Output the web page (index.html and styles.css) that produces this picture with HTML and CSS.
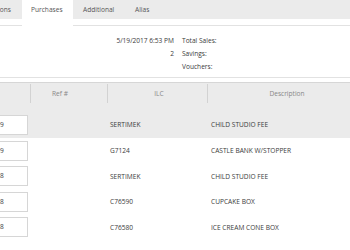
FILE: index.html
```html
<!DOCTYPE html>
<html>
<head>
<meta charset="utf-8">
<link rel="stylesheet" href="styles.css">
</head>
<body>
<div class="page">
  <div class="tabs">
    <div class="tab first">Transactions</div>
    <div class="tab active">Purchases</div>
    <div class="tab add">Additional</div>
    <div class="tab alias">Alias</div>
  </div>
  <div class="summary">
    <div class="vals">
      <div>5/19/2017 6:53 PM</div>
      <div>2</div>
      <div>&nbsp;</div>
    </div>
    <div class="labels">
      <div>Total Sales:</div>
      <div>Savings:</div>
      <div>Vouchers:</div>
    </div>
  </div>
  <div class="grid">
    <div class="row head">
      <div class="c1"></div>
      <div class="c2 sep">Ref #</div>
      <div class="c3 sep">ILC</div>
      <div class="c4 sep">Description</div>
    </div>
    <div class="row sel">
      <div class="c1"><div class="box">14.99</div></div>
      <div class="c2"></div>
      <div class="c3">SERTIMEK</div>
      <div class="c4">CHILD STUDIO FEE</div>
    </div>
    <div class="row">
      <div class="c1"><div class="box">14.99</div></div>
      <div class="c2"></div>
      <div class="c3">G7124</div>
      <div class="c4">CASTLE BANK W/STOPPER</div>
    </div>
    <div class="row">
      <div class="c1"><div class="box">14.98</div></div>
      <div class="c2"></div>
      <div class="c3">SERTIMEK</div>
      <div class="c4">CHILD STUDIO FEE</div>
    </div>
    <div class="row">
      <div class="c1"><div class="box">14.98</div></div>
      <div class="c2"></div>
      <div class="c3">C76590</div>
      <div class="c4">CUPCAKE BOX</div>
    </div>
    <div class="row">
      <div class="c1"><div class="box">14.98</div></div>
      <div class="c2"></div>
      <div class="c3">C76580</div>
      <div class="c4">ICE CREAM CONE BOX</div>
    </div>
  </div>
</div>
</body>
</html>
```

FILE: styles.css
```css
html, body {
  margin: 0;
  padding: 0;
  background: #fff;
  overflow: hidden;
  width: 350px;
  height: 250px;
}
body {
  font-family: "Open Sans", "Noto Sans", sans-serif;
  font-size: 6.6px;
  color: #3a3a3a;
}
.page {
  margin-left: -60px;
  width: 430px;
}
.tabs {
  display: flex;
  height: 25px;
  border-bottom: 1px solid #e2e2e2;
  background: linear-gradient(#ebebeb 0, #ebebeb 19px, #fff 19px);
}
.tab {
  height: 19px;
  line-height: 19px;
  padding: 0 10px;
  color: #555;
  box-sizing: border-box;
}
.tab.first {
  width: 82px;
  text-align: right;
  padding-right: 11px;
}
.tab.active {
  width: 51px;
  height: 26px;
  background: #fff;
  margin-bottom: -1px;
  padding: 0 0 0 9px;
}
.tab.add { width: 52px; }
.tab.alias { width: 40px; }
.summary {
  display: flex;
  height: 52px;
  padding-top: 8px;
  box-sizing: border-box;
  border-bottom: 1px solid #e2e2e2;
  line-height: 13px;
}
.vals {
  width: 234px;
  text-align: right;
}
.labels {
  padding-left: 8px;
}
.grid {
  margin-top: 4px;
  border-top: 1px solid #d6d6d6;
}
.row {
  display: grid;
  grid-template-columns: 90px 77px 100px 155px;
  height: 25.5px;
  align-items: center;
}
.row.head {
  height: 28px;
  background: #ebebeb;
  color: #888;
  text-align: center;
}
.row.head .sep {
  border-left: 1px solid #d2d2d2;
  height: 19px;
  line-height: 19px;
  align-self: start;
  margin-top: 1px;
}
.row.head .c2 { padding-right: 18px; }
.row.sel { background: #ebebeb; height: 27px; }
.c3 { padding-left: 3px; }
.c4 { padding-left: 4px; }
.box {
  height: 20px;
  margin-right: 2px;
  background: #fff;
  border: 1px solid #d6d6d6;
  box-sizing: border-box;
  line-height: 18px;
  padding-left: 46px;
}
```
